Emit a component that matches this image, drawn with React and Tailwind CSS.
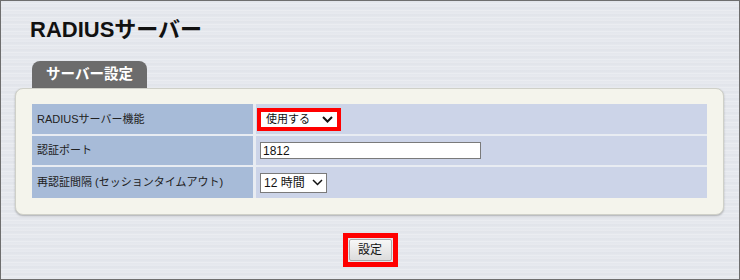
const font = '"Liberation Sans", "Noto Sans CJK JP", sans-serif';

function Chevron({ bold }) {
  return (
    <svg width="11" height="7" viewBox="0 0 11 7" aria-hidden="true">
      <polyline
        points="1,1 5.5,5.5 10,1"
        fill="none"
        stroke="#111"
        strokeWidth={bold ? 2 : 1.5}
      />
    </svg>
  );
}

const rows = [
  { label: 'RADIUSサーバー機能', kind: 'enable', h: 'h-[30px]' },
  { label: '認証ポート', kind: 'port', h: 'h-[29px]' },
  { label: '再認証間隔 (セッションタイムアウト)', kind: 'interval', h: 'h-[31px]' },
];

function Value({ kind }) {
  if (kind === 'enable') {
    return (
      <div className="ml-[1px] border-4 border-[#ff0000] w-[84px] h-[23px] flex items-center bg-white pl-[5px] pr-[4px]">
        <span className="text-[11px] leading-none text-[#111]">使用する</span>
        <span className="ml-auto flex">
          <Chevron bold />
        </span>
      </div>
    );
  }
  if (kind === 'port') {
    return (
      <div className="ml-[4px] w-[221px] h-[17px] border border-[#7a7a7a] bg-white flex items-center pl-[2px]">
        <span className="text-[12px] leading-none text-[#111]">1812</span>
      </div>
    );
  }
  return (
    <div className="ml-[4px] w-[67px] h-[20px] border border-[#7a7a7a] bg-white flex items-center pl-[3px] pr-[3px]">
      <span className="text-[12px] leading-none text-[#111]">12 時間</span>
      <span className="ml-auto flex">
        <Chevron />
      </span>
    </div>
  );
}

export default function App() {
  return (
    <div
      className="w-[740px] h-[280px] border border-[#6e6e6e] overflow-hidden bg-[#e4e7ed] bg-[repeating-linear-gradient(180deg,#e8ebf0_0px,#dcdfe6_1px,#edeff3_2px,#e2e5eb_4px,#eaecf1_5px,#dfe2e8_7px)]"
      style={{ fontFamily: font }}
    >
      <h1 className="mt-[16px] ml-[29px] text-[22px] leading-[26px] font-bold text-[#111]">
        RADIUSサーバー
      </h1>

      <div className="mt-[18px] ml-[31px] w-[115px] h-[27px] rounded-t-[8px] bg-[#6c6c6c] flex items-center justify-center">
        <span className="text-[14.5px] leading-none font-bold text-white">サーバー設定</span>
      </div>

      <div className="ml-[14px] w-[709px] h-[127px] rounded-[8px] border border-[#cfd0c8] bg-[#f4f4ec] shadow-[0_1px_2px_rgba(0,0,0,0.25)] pt-[15px] pl-[16px]">
        <div className="grid grid-cols-[221px_451px] gap-x-[3px] gap-y-[2px] w-[675px] bg-[#e8ecf2]">
          {rows.map((r) => (
            <div key={r.kind} className="contents">
              <div className={`${r.h} bg-[#a7bbd8] flex items-center pl-[5px]`}>
                <span className="text-[11px] leading-none text-[#222]">{r.label}</span>
              </div>
              <div className={`${r.h} bg-[#ccd4e8] flex items-center`}>
                <Value kind={r.kind} />
              </div>
            </div>
          ))}
        </div>
      </div>

      <div className="mt-[18px] flex justify-center">
        <div className="border-[5px] border-[#ff0000] w-[55px] h-[34px] flex items-center justify-center">
          <button
            type="button"
            className="w-[43px] h-[22px] border border-[#a9a9a9] rounded-[2px] bg-[linear-gradient(180deg,#f7f7f7,#dcdcdc)] text-[12px] leading-none text-[#111]"
            style={{ fontFamily: font }}
          >
            設定
          </button>
        </div>
      </div>
    </div>
  );
}
